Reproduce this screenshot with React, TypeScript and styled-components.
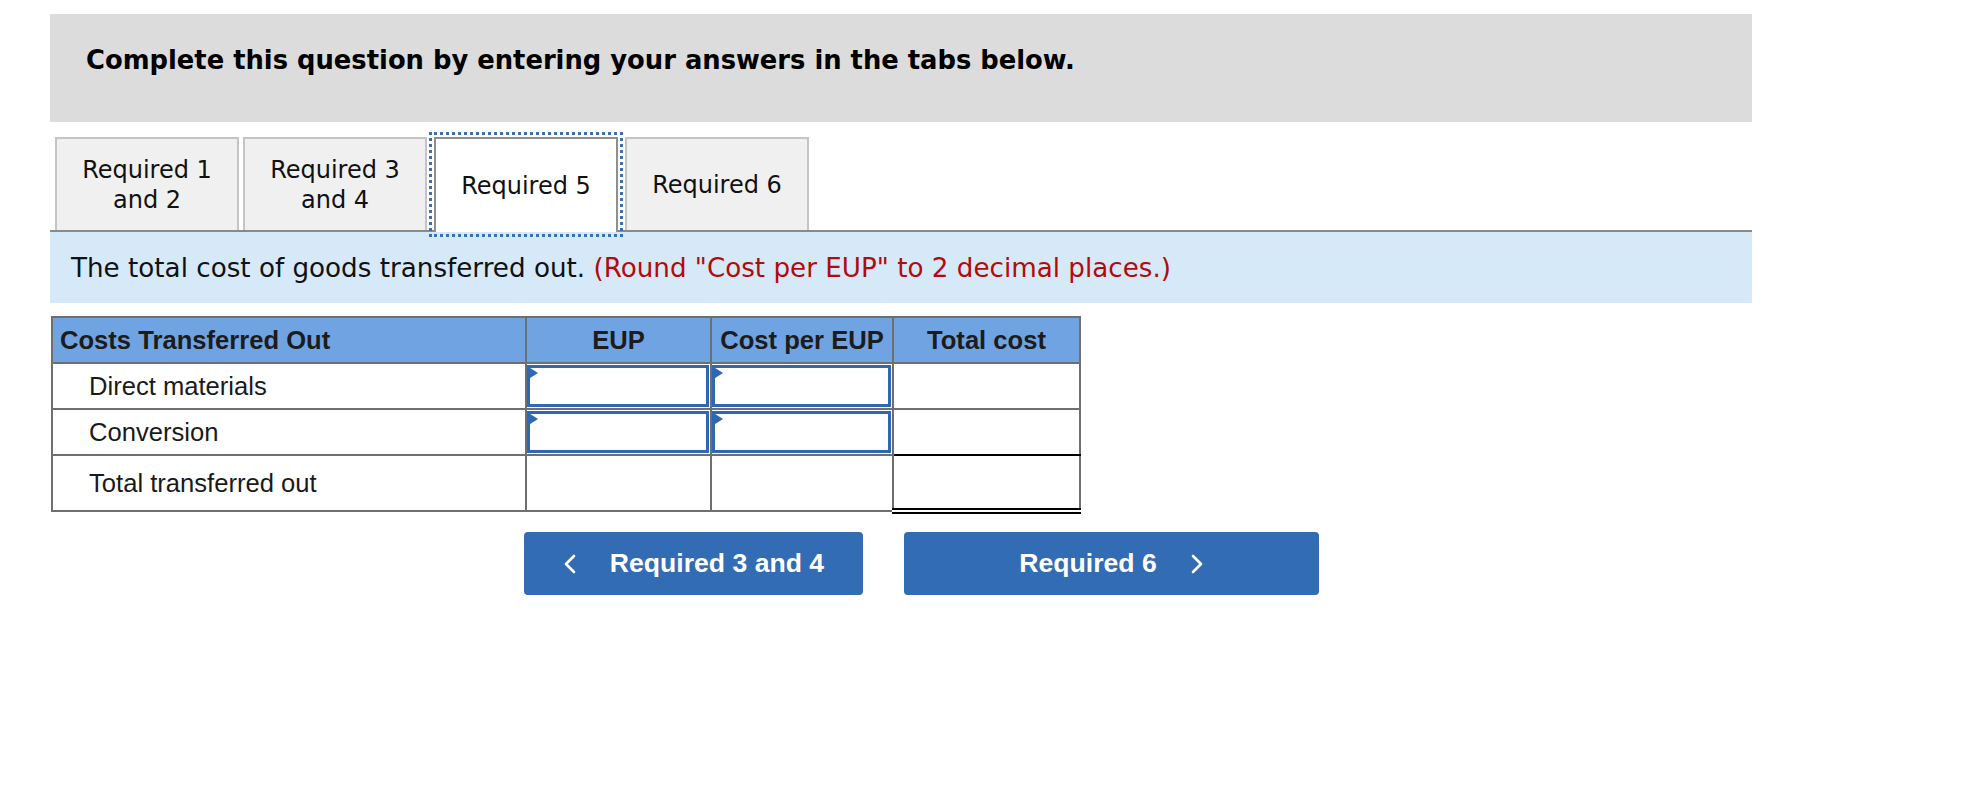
import * as React from "react";
import styled, { createGlobalStyle } from "styled-components";

const GlobalStyle = createGlobalStyle`
  html, body {
    margin: 0;
    padding: 0;
    background: #ffffff;
  }
  * {
    box-sizing: border-box;
  }
`;

const tabs = [
  { id: "r12", label: ["Required 1", "and 2"] },
  { id: "r34", label: ["Required 3", "and 4"] },
  { id: "r5", label: ["Required 5"] },
  { id: "r6", label: ["Required 6"] },
];

const rows = [
  { label: "Direct materials", line: "none" },
  { label: "Conversion", line: "single" },
] as const;

const Chevron: React.FC<{ dir: "left" | "right" }> = ({ dir }) => (
  <svg width="14" height="20" viewBox="0 0 14 20" aria-hidden="true">
    <polyline
      points={dir === "left" ? "11,2 3,10 11,18" : "3,2 11,10 3,18"}
      fill="none"
      stroke="#ffffff"
      strokeWidth="2.6"
      strokeLinecap="round"
      strokeLinejoin="round"
    />
  </svg>
);

const App: React.FunctionComponent = () => {
  return (
    <Page>
      <GlobalStyle />
      <Banner>Complete this question by entering your answers in the tabs below.</Banner>

      <TabList>
        {tabs.map((tab) => (
          <Tab key={tab.id} $active={tab.id === "r5"}>
            {tab.label.map((line) => (
              <span key={line}>{line}</span>
            ))}
          </Tab>
        ))}
      </TabList>

      <Instructions>
        The total cost of goods transferred out.{" "}
        <Hint>(Round "Cost per EUP" to 2 decimal places.)</Hint>
      </Instructions>

      <CostTable>
        <colgroup>
          <col style={{ width: 474 }} />
          <col style={{ width: 185 }} />
          <col style={{ width: 182 }} />
          <col style={{ width: 187 }} />
        </colgroup>
        <thead>
          <HeadRow>
            <HeadCell $align="left">Costs Transferred Out</HeadCell>
            <HeadCell>EUP</HeadCell>
            <HeadCell>Cost per EUP</HeadCell>
            <HeadCell>Total cost</HeadCell>
          </HeadRow>
        </thead>
        <tbody>
          {rows.map((row) => (
            <BodyRow key={row.label}>
              <LabelCell>{row.label}</LabelCell>
              <EntryCell>
                <EntryBox>
                  <EntryInput aria-label={`${row.label} EUP`} />
                </EntryBox>
              </EntryCell>
              <EntryCell>
                <EntryBox>
                  <EntryInput aria-label={`${row.label} cost per EUP`} />
                </EntryBox>
              </EntryCell>
              <ValueCell $line={row.line} />
            </BodyRow>
          ))}
          <BodyRow $tall>
            <LabelCell>Total transferred out</LabelCell>
            <ValueCell />
            <ValueCell />
            <ValueCell $line="double" />
          </BodyRow>
        </tbody>
      </CostTable>

      <NavRow>
        <NavButton $width={339}>
          <Chevron dir="left" />
          <span>Required 3 and 4</span>
        </NavButton>
        <NavButton $width={415}>
          <span>Required 6</span>
          <Chevron dir="right" />
        </NavButton>
      </NavRow>
    </Page>
  );
};

export default App;

const Page = styled.div`
  padding: 14px 0 0 50px;
  width: 1752px;
  min-height: 790px;
`;

const Banner = styled.h2`
  margin: 0;
  height: 108px;
  padding: 31px 36px 0;
  background: #dcdcdc;
  font-family: "DejaVu Sans", Verdana, sans-serif;
  font-weight: 700;
  font-size: 25.8px;
  line-height: 30px;
  color: #000000;
`;

const TabList = styled.div`
  display: flex;
  align-items: stretch;
  gap: 4px;
  margin-top: 15px;
  padding-left: 5px;
  height: 95px;
  border-bottom: 2px solid #8a8a8a;
`;

const Tab = styled.div<{ $active?: boolean }>`
  position: relative;
  width: 184px;
  display: flex;
  flex-direction: column;
  align-items: center;
  justify-content: center;
  margin: ${({ $active }) => ($active ? "0 3px -2px" : "0")};
  background: ${({ $active }) => ($active ? "#ffffff" : "#f0f0f0")};
  border: 2px solid ${({ $active }) => ($active ? "#8f8f8f" : "#c4c4c4")};
  border-bottom: none;
  outline: ${({ $active }) => ($active ? "3px dotted #3a6fb7" : "none")};
  outline-offset: 2px;
  font-family: "DejaVu Sans", Verdana, sans-serif;
  font-size: 24px;
  line-height: 30px;
  color: #111111;
  text-align: center;
`;

const Instructions = styled.p`
  margin: 0;
  height: 71px;
  display: flex;
  align-items: center;
  padding-left: 21px;
  background: #d6e9f9;
  font-family: "DejaVu Sans", Verdana, sans-serif;
  font-size: 26.2px;
  color: #111111;
  white-space: pre;
`;

const Hint = styled.span`
  color: #b30a0a;
`;

const CostTable = styled.table`
  margin: 13px 0 0 1px;
  width: 1028px;
  table-layout: fixed;
  border-collapse: collapse;
  font-family: "Liberation Sans", Arial, sans-serif;
  font-size: 25.6px;
  color: #1a1a1a;
`;

const HeadRow = styled.tr`
  height: 46px;
  background: #6fa3e2;
`;

const HeadCell = styled.th<{ $align?: "left" | "center" }>`
  border: 2px solid #6f6f6f;
  padding: 0 0 0 ${({ $align }) => ($align === "left" ? "7px" : "0")};
  text-align: ${({ $align }) => $align ?? "center"};
  font-weight: 700;
  color: #1c1c1c;
  white-space: nowrap;
`;

const BodyRow = styled.tr<{ $tall?: boolean }>`
  height: ${({ $tall }) => ($tall ? "56px" : "46px")};
`;

const LabelCell = styled.td`
  border: 2px solid #6f6f6f;
  padding: 0 0 0 36px;
  white-space: nowrap;
`;

const EntryCell = styled.td`
  border: 2px solid #6f6f6f;
  padding: 1px 1px 1px 0;
  height: 46px;
`;

const EntryBox = styled.div`
  position: relative;
  height: 42px;

  &::before {
    content: "";
    position: absolute;
    top: 1px;
    left: 0;
    border-left: 11px solid #2f68b2;
    border-top: 7px solid transparent;
    border-bottom: 7px solid transparent;
  }
`;

const EntryInput = styled.input`
  display: block;
  width: 100%;
  height: 100%;
  margin: 0;
  padding: 0 8px;
  border: 3px solid #2f68b2;
  background: #ffffff;
  font: inherit;
  outline: none;
`;

const ValueCell = styled.td<{ $line?: "none" | "single" | "double" }>`
  border: 2px solid #6f6f6f;
  border-bottom: ${({ $line }) =>
    $line === "single"
      ? "2px solid #000000"
      : $line === "double"
      ? "6px double #000000"
      : "2px solid #6f6f6f"};
`;

const NavRow = styled.div`
  display: flex;
  gap: 41px;
  margin-top: 18px;
  padding-left: 474px;
`;

const NavButton = styled.button<{ $width: number }>`
  width: ${({ $width }) => $width}px;
  height: 63px;
  display: flex;
  align-items: center;
  justify-content: center;
  gap: 33px;
  padding: 0;
  border: none;
  border-radius: 4px;
  background: #326cb4;
  color: #ffffff;
  font-family: "Liberation Sans", Arial, sans-serif;
  font-weight: 700;
  font-size: 26.6px;
  cursor: pointer;
`;
